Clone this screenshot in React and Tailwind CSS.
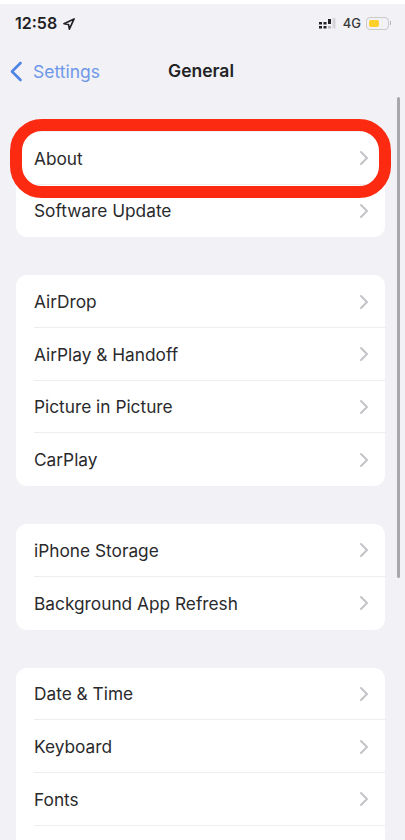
const groups = [
  { rows: ["About", "Software Update"] },
  { rows: ["AirDrop", "AirPlay & Handoff", "Picture in Picture", "CarPlay"] },
  { rows: ["iPhone Storage", "Background App Refresh"] },
  { rows: ["Date & Time", "Keyboard", "Fonts", ""] },
];

function Chevron() {
  return (
    <svg width="10" height="16" viewBox="0 0 10 16" fill="none" className="shrink-0">
      <path d="M2 2l6 6-6 6" stroke="#c4c4c8" strokeWidth="2" strokeLinecap="round" strokeLinejoin="round" />
    </svg>
  );
}

function Row({ label, last }) {
  return (
    <div className="relative flex h-[52.7px] items-center justify-between pl-[18px] pr-[16px]">
      <span className="text-[17.3px] leading-none text-[#2a2a2c]">{label}</span>
      <Chevron />
      {!last && <div className="absolute bottom-0 left-[18px] right-0 h-px bg-[#eeeef1]" />}
    </div>
  );
}

export default function App() {
  return (
    <div className="relative h-[840px] w-[405px] overflow-hidden bg-[#f1f1f6] font-['Inter','Liberation_Sans',sans-serif]">
      <div className="h-[4px] bg-white" />
      <div className="flex h-[38px] items-center justify-between pl-[15px] pr-[14px]">
        <div className="flex items-center gap-[6px]">
          <span className="text-[16px] font-semibold leading-none text-[#222224]">12:58</span>
          <svg width="12" height="12" viewBox="0 0 13 13" className="mt-px">
            <path d="M12 1L1 6.2l5 .9.9 5z" fill="none" stroke="#222224" strokeWidth="1.8" strokeLinejoin="round" />
          </svg>
        </div>
        <div className="flex items-center gap-[5px]">
          <svg width="18" height="11" viewBox="0 0 18 11" className="mr-px">
            <rect x="0" y="4" width="3" height="2.5" fill="#222224" />
            <rect x="0" y="8" width="3" height="2.5" fill="#222224" />
            <rect x="4.5" y="4" width="3" height="2.5" fill="#222224" />
            <rect x="4.5" y="8" width="3" height="2.5" fill="#222224" />
            <rect x="9" y="1" width="3" height="5" fill="#222224" />
            <rect x="9" y="8" width="3" height="2.5" fill="#b9b9bd" />
            <rect x="13.5" y="0" width="3" height="10.5" fill="#d6d6da" />
          </svg>
          <span className="text-[13px] font-medium leading-none text-[#38383a]">4G</span>
          <div className="flex items-center">
            <div className="flex h-[13px] w-[23px] items-center rounded-[4px] border-[1.5px] border-[#cbcbc9] p-[2px]">
              <div className="h-full w-[10px] rounded-[2px] bg-[#fdd02a]" />
            </div>
            <div className="ml-px h-[4px] w-[1px] bg-[#b8b8ba]" />
          </div>
        </div>
      </div>
      <div className="relative flex h-[58px] items-center justify-center pr-[3px]">
        <div className="absolute left-[9px] top-[19px] flex items-center gap-[10px]">
          <svg width="14" height="21" viewBox="0 0 14 21" fill="none">
            <path d="M11.5 2L3 10.5l8.5 8.5" stroke="#4f83e6" strokeWidth="2.6" strokeLinecap="round" strokeLinejoin="round" />
          </svg>
          <span className="text-[17.5px] leading-none text-[#6f98e8]">Settings</span>
        </div>
        <span className="text-[17.5px] font-semibold leading-none text-[#232325]">General</span>
      </div>
      <div className="flex flex-col gap-[38px] pl-[16px] pr-[20px] pt-[32px]">
        {groups.map((g, i) => (
          <div key={i} className="overflow-hidden rounded-[11px] bg-white">
            {g.rows.map((r, j) => (
              <Row key={j} label={r} last={j === g.rows.length - 1} />
            ))}
          </div>
        ))}
      </div>
      <div className="absolute left-[10px] top-[119px] h-[79px] w-[381px] rounded-[32px] border-[12px] border-[#fb2a10]" />
      <div className="absolute left-[397px] top-[97px] h-[481px] w-[3px] rounded-full bg-[#a8a8ac]" />
    </div>
  );
}
